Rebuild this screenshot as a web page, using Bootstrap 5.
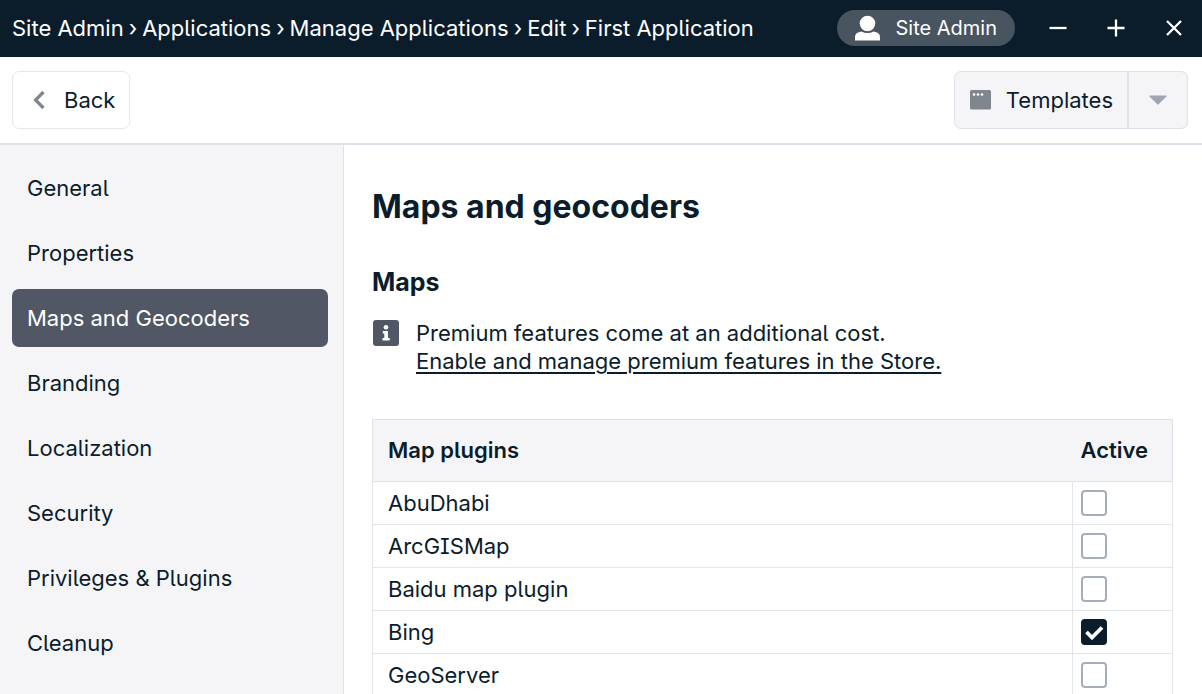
<!DOCTYPE html>
<html lang="en">
<head>
<meta charset="utf-8">
<meta name="viewport" content="width=device-width, initial-scale=1">
<title>First Application</title>
<link href="https://cdn.jsdelivr.net/npm/bootstrap@5.3.0/dist/css/bootstrap.min.css" rel="stylesheet">
<style>
:root { --ink: #0b1d2b; --slate: #515764; --line: #dfe1e8; --pale: #f5f5f8; }
body { font-family: Inter, "Liberation Sans", sans-serif; font-size: 22px; line-height: 28px; color: var(--ink); font-feature-settings: "cv05", "cv08"; }
a { color: inherit; text-decoration: none; }
svg { display: block; flex: none; }
.titlebar { background: var(--ink); color: #fff; height: 57px; padding: 0 11px 2px 12px; }
.crumbs { gap: 5px; }
.title-tools { gap: 26px; }
.user-pill { background: #485460; color: #fff; font-size: 20px; height: 36px; padding: 0 18px; gap: 15px; border: 0; }
.win-btn { background: none; border: 0; color: #fff; padding: 0; width: 34px; height: 34px; display: flex; align-items: center; justify-content: center; }
.toolbar { padding: 14px 14px 14px 12px; border-bottom: 2px solid var(--line); }
.tool-btn { --bs-btn-color: var(--ink); --bs-btn-font-size: 22px; --bs-btn-line-height: 28px; --bs-btn-padding-x: 14px; --bs-btn-padding-y: 14px; --bs-btn-border-radius: 7px; --bs-btn-border-color: #e6e6e8; --bs-btn-hover-color: var(--ink); --bs-btn-hover-border-color: var(--line); gap: 14px; }
.tool-btn.filled { --bs-btn-bg: var(--pale); --bs-btn-border-color: var(--line); --bs-btn-hover-bg: #ececf1; }
.caret-btn { width: 61px; border-left-width: 2px; }
.side { width: 344px; flex: none; background: var(--pale); border-right: 1px solid var(--line); padding: 14px 15px 14px 12px; gap: 7px; }
.side .nav-link { color: var(--ink); padding: 15px; border-radius: 7px; }
.side .nav-link.active { background: var(--slate); color: #fff; }
main { padding: 40px 29px 0 28px; min-width: 0; }
h1 { font-size: 32px; line-height: 44px; font-weight: 700; margin: 0 0 37px; }
h2 { font-size: 25px; line-height: 32px; font-weight: 700; margin: 0 0 21px; }
.notice { gap: 16px; margin-bottom: 44px; }
.notice a { text-decoration: underline; text-decoration-thickness: 2px; text-underline-offset: 3px; }
.plugins { --bs-table-color: var(--ink); border: 1px solid var(--line); margin: 0; }
.plugins th { background: var(--pale); font-weight: 600; padding: 16px 8px 17px 15px; border-color: var(--line); border-width: 1px 0; }
.plugins td { padding: 7px 8px 7px 15px; border: 1px solid #e4e5e9; }
.plugins th:last-child, .plugins td:last-child { width: 100px; padding-left: 8px; }
.plugins .form-check-input { display: block; width: 26px; height: 26px; margin: 1px 0; border: 2px solid #a6adbb; border-radius: 4px; }
.plugins .form-check-input:checked { background-color: var(--ink); border-color: var(--ink); background-size: 26px; background-image: url("data:image/svg+xml,%3csvg xmlns='http://www.w3.org/2000/svg' viewBox='0 0 26 26'%3e%3cpath fill='none' stroke='%23fff' stroke-width='3.8' d='M5.500 13l5.500 5.500L21 8.500'/%3e%3c/svg%3e"); }
</style>
</head>
<body class="d-flex flex-column min-vh-100">
<header class="titlebar d-flex align-items-center justify-content-between">
  <nav class="crumbs d-flex text-nowrap" aria-label="Breadcrumb">
    <a href="#">Site Admin</a><span>›</span><a href="#">Applications</a><span>›</span><a href="#">Manage Applications</a><span>›</span><a href="#">Edit</a><span>›</span><a href="#">First Application</a>
  </nav>
  <div class="title-tools d-flex align-items-center">
    <button type="button" class="user-pill rounded-pill d-flex align-items-center text-nowrap">
      <svg width="25" height="26" viewBox="0 0 25 26" fill="currentColor"><circle cx="12.500" cy="8.500" r="7.800"/><path d="M0 25.500v-3.500q0-4 4.500-5l2-.5q6 3 12 0l2 .5q4.500 1 4.500 5v3.500z"/></svg>
      Site Admin
    </button>
    <div class="d-flex align-items-center gap-4">
      <button type="button" class="win-btn" aria-label="Minimize"><svg width="18" height="18" viewBox="0 0 18 18" fill="none" stroke="currentColor" stroke-width="2.300"><path d="M.5 9h17"/></svg></button>
      <button type="button" class="win-btn" aria-label="Maximize"><svg width="18" height="18" viewBox="0 0 18 18" fill="none" stroke="currentColor" stroke-width="2.300"><path d="M.5 9h17M9 .5v17"/></svg></button>
      <button type="button" class="win-btn" aria-label="Close"><svg width="18" height="18" viewBox="0 0 18 18" fill="none" stroke="currentColor" stroke-width="2.300"><path d="M2 2l14 14M16 2L2 16"/></svg></button>
    </div>
  </div>
</header>
<div class="toolbar d-flex justify-content-between">
  <button type="button" class="btn tool-btn d-flex align-items-center">
    <svg width="23" height="20" viewBox="0 0 23 20" fill="none" stroke="#80868e" stroke-width="3.200"><path d="M16.500 2L8.500 10l8 8"/></svg>
    Back
  </button>
  <div class="btn-group">
    <button type="button" class="btn tool-btn filled d-flex align-items-center">
      <svg width="23" height="20" viewBox="0 0 23 20"><rect x="1" width="21" height="19.500" rx="1.500" fill="#80868e"/><g fill="#fff"><circle cx="5" cy="4.500" r="1.300"/><circle cx="9" cy="4.500" r="1.300"/><circle cx="13" cy="4.500" r="1.300"/></g></svg>
      Templates
    </button>
    <button type="button" class="btn tool-btn filled caret-btn d-flex align-items-center justify-content-center" aria-label="More templates">
      <svg width="18" height="10" viewBox="0 0 18 10"><path d="M1 .5h16q1 0 .5 1L9.700 9.300q-.7.600-1.400 0L.5 1.500Q0 .5 1 .5z" fill="#a0a6b4"/></svg>
    </button>
  </div>
</div>
<div class="d-flex flex-grow-1">
  <nav class="side nav flex-column flex-nowrap" aria-label="Settings">
    <a class="nav-link" href="#">General</a>
    <a class="nav-link" href="#">Properties</a>
    <a class="nav-link active" href="#" aria-current="page">Maps and Geocoders</a>
    <a class="nav-link" href="#">Branding</a>
    <a class="nav-link" href="#">Localization</a>
    <a class="nav-link" href="#">Security</a>
    <a class="nav-link" href="#">Privileges &amp; Plugins</a>
    <a class="nav-link" href="#">Cleanup</a>
  </nav>
  <main class="flex-grow-1">
    <h1>Maps and geocoders</h1>
    <h2>Maps</h2>
    <div class="notice d-flex align-items-start">
      <svg width="28" height="28" viewBox="0 0 28 28"><rect x="1" y="1" width="26" height="26" rx="3" fill="#515764"/><g fill="#fff"><circle cx="14" cy="8.300" r="2.300"/><path d="M10.800 12h5.200v7h1.700v2.500h-7.200V19h1.800v-4.500h-1.500z"/></g></svg>
      <div>Premium features come at an additional cost.<br><a href="#">Enable and manage premium features in the Store.</a></div>
    </div>
    <table class="table plugins align-middle">
      <thead><tr><th scope="col">Map plugins</th><th scope="col">Active</th></tr></thead>
      <tbody>
        <tr><td><label for="p1">AbuDhabi</label></td><td><input class="form-check-input" type="checkbox" id="p1"></td></tr>
        <tr><td><label for="p2">ArcGISMap</label></td><td><input class="form-check-input" type="checkbox" id="p2"></td></tr>
        <tr><td><label for="p3">Baidu map plugin</label></td><td><input class="form-check-input" type="checkbox" id="p3"></td></tr>
        <tr><td><label for="p4">Bing</label></td><td><input class="form-check-input" type="checkbox" id="p4" checked></td></tr>
        <tr><td><label for="p5">GeoServer</label></td><td><input class="form-check-input" type="checkbox" id="p5"></td></tr>
      </tbody>
    </table>
  </main>
</div>
<script src="https://cdn.jsdelivr.net/npm/bootstrap@5.3.0/dist/js/bootstrap.bundle.min.js"></script>
</body>
</html>
